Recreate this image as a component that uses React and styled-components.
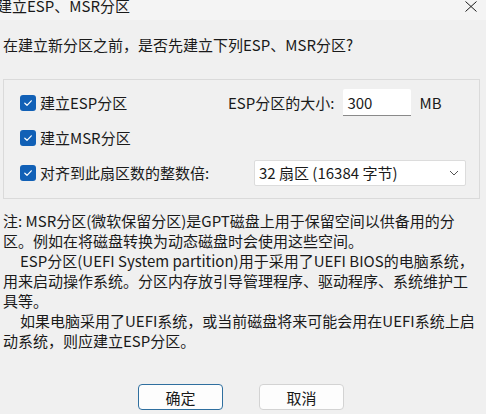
import React from "react";
import styled, { createGlobalStyle } from "styled-components";

const Global = createGlobalStyle`
  html, body { margin: 0; padding: 0; background: #f0f0f0; }
  * { box-sizing: border-box; }
`;

const FONT = `"Noto Sans CJK SC", "Noto Sans", sans-serif`;

const Dialog = styled.div`
  width: 486px;
  height: 414px;
  overflow: hidden;
  background: #f0f0f0;
  font-family: ${FONT};
  font-size: 15px;
  color: #1a1a1a;
  display: flex;
  flex-direction: column;
`;

const TitleBar = styled.div`
  height: 20px;
  padding: 0 9px 8px 0;
  background: #f4f4f4;
  display: flex;
  align-items: center;
  justify-content: space-between;
`;

const Title = styled.div`
  margin-left: -3px;
  line-height: 14px;
  white-space: nowrap;
`;

const CloseIcon = styled.svg`
  width: 12px;
  height: 11px;
  display: block;
`;

const Question = styled.div`
  margin: 15px 0 0 3px;
  line-height: 20px;
  white-space: nowrap;
`;

const Group = styled.div`
  margin: 24px 6px 0 3px;
  border: 1px solid #dadada;
  padding: 9px 0 12px 16px;
  display: flex;
  flex-direction: column;
  gap: 8px;
`;

const Row = styled.div`
  height: 27px;
  display: flex;
  align-items: center;
`;

const Left = styled.div`
  width: ${(p) => p.$w}px;
  display: flex;
  align-items: center;
  gap: 4px;
  white-space: nowrap;
`;

const Box = styled.span`
  width: 16px;
  height: 16px;
  border-radius: 3px;
  background: #1160b6;
  display: inline-flex;
  align-items: center;
  justify-content: center;
  flex: none;
`;

const Label = styled.span`
  white-space: nowrap;
  line-height: 20px;
`;

const SizeLabel = styled(Label)`
  margin-right: 9px;
`;

const Input = styled.div`
  width: 68px;
  height: 27px;
  background: #ffffff;
  border-bottom: 1px solid #8a8a8a;
  border-radius: 2px 2px 0 0;
  padding: 0 4px;
  display: flex;
  align-items: center;
`;

const Unit = styled(Label)`
  margin-left: 8px;
`;

const Select = styled.div`
  width: 212px;
  height: 26px;
  background: #ffffff;
  border: 1px solid #dcdcdc;
  border-radius: 2px;
  padding: 0 6px 0 4px;
  display: flex;
  align-items: center;
  justify-content: space-between;
`;

const Notes = styled.div`
  margin: 12px 0 0 3px;
  line-height: 20px;
`;

const Line = styled.div`
  white-space: nowrap;
  padding-left: ${(p) => (p.$indent ? 17 : 0)}px;
`;

const Buttons = styled.div`
  margin-top: auto;
  margin-bottom: 4px;
  display: flex;
  justify-content: center;
  gap: 36px;
  padding-right: 4px;
`;

const Button = styled.div`
  width: 85px;
  height: 26px;
  border-radius: 4px;
  background: #fdfdfd;
  border: 1px solid ${(p) => (p.$primary ? "#2f6f9f" : "#d3d3d3")};
  display: flex;
  align-items: center;
  justify-content: center;
  font-size: 15px;
`;

const Check = () => (
  <Box>
    <svg width="10" height="10" viewBox="0 0 10 10">
      <path d="M1.8 5.2 L4 7.3 L8.3 2.8" fill="none" stroke="#fff" strokeWidth="1.2" strokeLinecap="round" strokeLinejoin="round" />
    </svg>
  </Box>
);

export default function App() {
  return (
    <>
      <Global />
      <Dialog>
        <TitleBar>
          <Title>建立ESP、MSR分区</Title>
          <CloseIcon viewBox="0 0 12 11">
            <path d="M0.5 0.5 L11.5 10.5 M11.5 0.5 L0.5 10.5" stroke="#1a1a1a" strokeWidth="1" fill="none" />
          </CloseIcon>
        </TitleBar>
        <Question>在建立新分区之前，是否先建立下列ESP、MSR分区?</Question>
        <Group>
          <Row>
            <Left $w={208}>
              <Check />
              <Label>建立ESP分区</Label>
            </Left>
            <SizeLabel>ESP分区的大小:</SizeLabel>
            <Input>300</Input>
            <Unit>MB</Unit>
          </Row>
          <Row>
            <Left $w={208}>
              <Check />
              <Label>建立MSR分区</Label>
            </Left>
          </Row>
          <Row>
            <Left $w={234}>
              <Check />
              <Label>对齐到此扇区数的整数倍:</Label>
            </Left>
            <Select>
              <span>32 扇区 (16384 字节)</span>
              <svg width="10" height="6" viewBox="0 0 10 6">
                <path d="M1 1 L5 5 L9 1" fill="none" stroke="#555" strokeWidth="1" />
              </svg>
            </Select>
          </Row>
        </Group>
        <Notes>
          <Line>注: MSR分区(微软保留分区)是GPT磁盘上用于保留空间以供备用的分</Line>
          <Line>区。例如在将磁盘转换为动态磁盘时会使用这些空间。</Line>
          <Line $indent>ESP分区(UEFI System partition)用于采用了UEFI BIOS的电脑系统，</Line>
          <Line>用来启动操作系统。分区内存放引导管理程序、驱动程序、系统维护工</Line>
          <Line>具等。</Line>
          <Line $indent>如果电脑采用了UEFI系统，或当前磁盘将来可能会用在UEFI系统上启</Line>
          <Line>动系统，则应建立ESP分区。</Line>
        </Notes>
        <Buttons>
          <Button $primary>确定</Button>
          <Button>取消</Button>
        </Buttons>
      </Dialog>
    </>
  );
}
